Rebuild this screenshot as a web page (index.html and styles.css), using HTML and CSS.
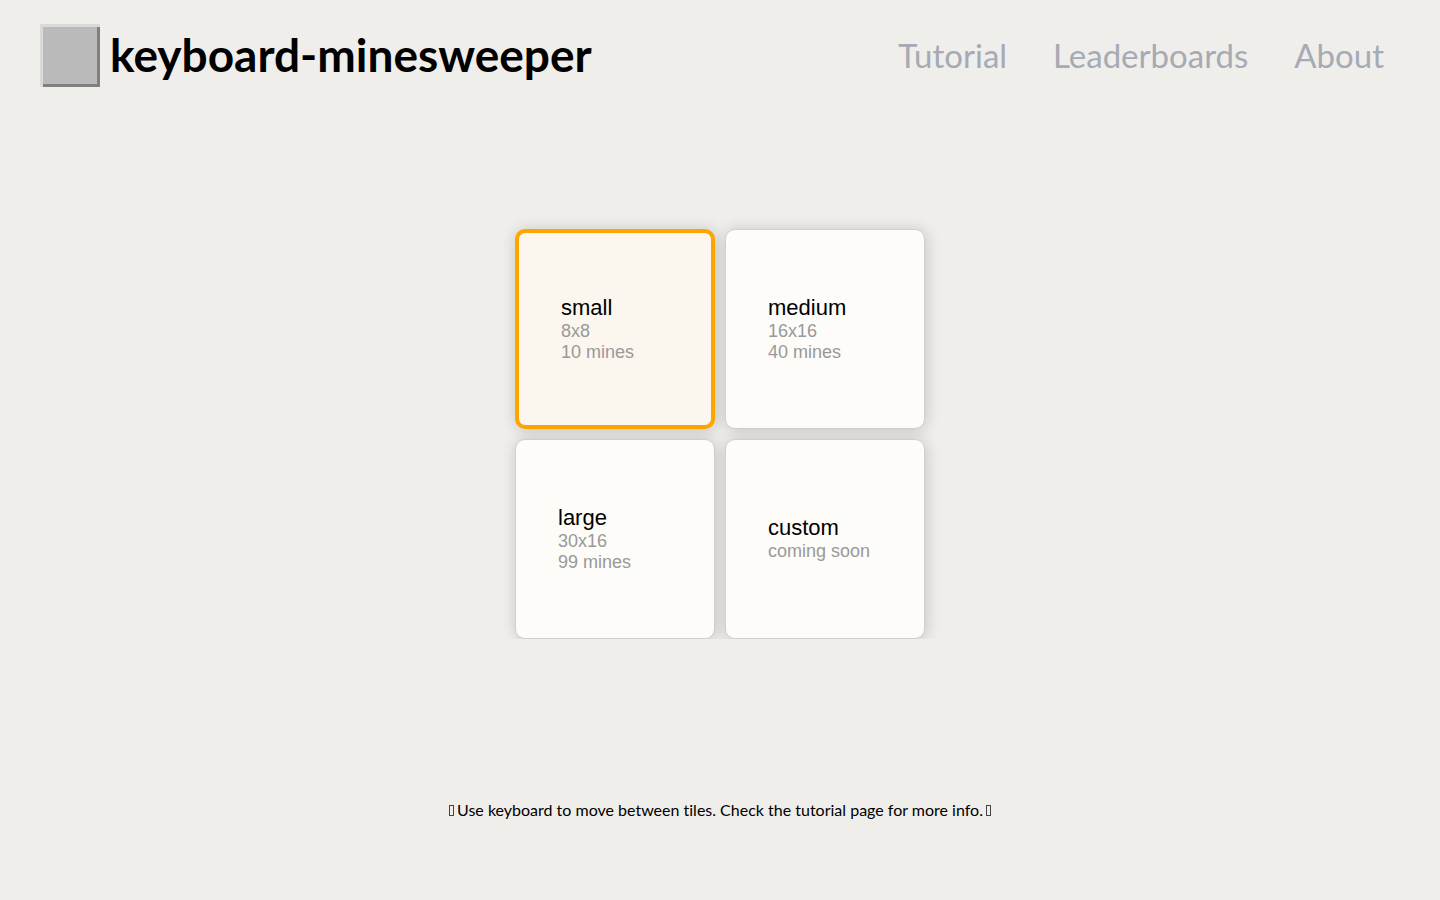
FILE: index.html
```html
<!DOCTYPE html>
<html lang="en">
<head>
<meta charset="utf-8">
<title>keyboard-minesweeper</title>
<link rel="stylesheet" href="styles.css">
</head>
<body>
<header class="header">
  <div class="brand">
    <span class="brand-tile" aria-hidden="true"></span>
    <h1 class="brand-name">keyboard-minesweeper</h1>
  </div>
  <nav class="nav">
    <a class="nav-link" href="#tutorial">Tutorial</a>
    <a class="nav-link" href="#leaderboards">Leaderboards</a>
    <a class="nav-link" href="#about">About</a>
  </nav>
</header>
<main class="menu">
  <div class="tiles">
    <button class="tile tile-selected" type="button"><span class="tile-title">small</span><span class="tile-info">8x8</span><span class="tile-info">10 mines</span></button>
    <button class="tile" type="button"><span class="tile-title">medium</span><span class="tile-info">16x16</span><span class="tile-info">40 mines</span></button>
    <button class="tile" type="button"><span class="tile-title">large</span><span class="tile-info">30x16</span><span class="tile-info">99 mines</span></button>
    <button class="tile" type="button"><span class="tile-title">custom</span><span class="tile-info">coming soon</span></button>
  </div>
</main>
<footer class="hint">
  <p class="hint-text"><span class="hint-mark"></span>Use keyboard to move between tiles. Check the tutorial page for more info.<span class="hint-mark"></span></p>
</footer>
</body>
</html>
```

FILE: styles.css
```css
* {
  box-sizing: border-box;
}

body {
  margin: 0;
  min-height: 100vh;
  display: flex;
  flex-direction: column;
  background: #efeeea;
  color: #000;
  font-family: Lato, sans-serif;
  font-variant-ligatures: none;
}

.header {
  display: flex;
  align-items: center;
  justify-content: space-between;
  padding: 24px 56px 24px 40px;
}

.brand {
  display: flex;
  align-items: flex-start;
  gap: 10px;
}

.brand-tile {
  width: 60px;
  height: 63px;
  background: #bababa;
  box-shadow: inset 3px 3px #d9d9d9, inset -3px -3px #7f7f7f;
}

.brand-name {
  margin: 0;
  font-size: 46px;
  line-height: 61px;
  font-weight: 700;
}

.nav {
  display: flex;
  gap: 46px;
}

.nav-link {
  color: #a6aab5;
  font-size: 33px;
  line-height: 63px;
  text-decoration: none;
}

.menu {
  flex: 1;
  display: flex;
  align-items: center;
  justify-content: center;
}

.tiles {
  display: grid;
  grid-template-columns: repeat(2, 200px);
  grid-auto-rows: 200px;
  gap: 10px;
  padding: 32px 32px 0;
  margin-bottom: 32px;
  overflow: hidden;
}

.tile {
  display: flex;
  flex-direction: column;
  align-items: flex-start;
  justify-content: center;
  padding: 0 42px;
  border: 1px solid #d0d0ce;
  border-radius: 10px;
  background: #fdfcf8;
  box-shadow: 1px 1px 15px rgba(0, 0, 0, 0.18);
  font-family: "Liberation Sans", Arial, sans-serif;
  text-align: left;
}

.tile-selected {
  border: 4px solid #ffa500;
  background: #fbf6ee;
}

.tile-title {
  color: #000;
  font-size: 22px;
  line-height: 26px;
}

.tile-info {
  color: #999;
  font-size: 18px;
  line-height: 21px;
}

.hint {
  padding: 44px 40px 80px;
}

.hint-text {
  display: flex;
  align-items: center;
  justify-content: center;
  gap: 3px;
  margin: 0;
  font-size: 16px;
  line-height: 20px;
}

.hint-mark {
  width: 5px;
  height: 11px;
  border: 1px solid #444;
}
```
